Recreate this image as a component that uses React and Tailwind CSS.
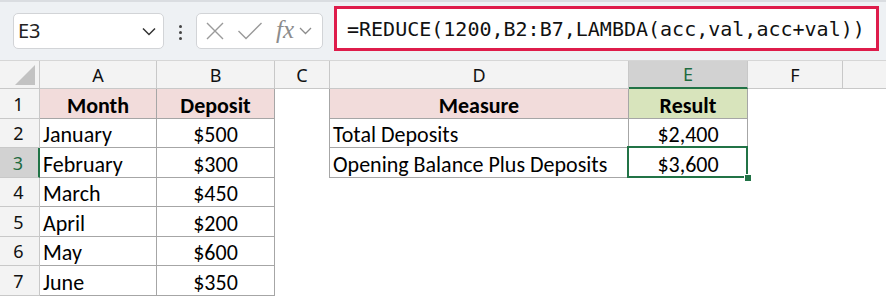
import React from "react";

const COLS = [
  "w-[117px]",
  "w-[118px]",
  "w-[55px]",
  "w-[299px]",
  "w-[119px]",
  "w-[95px]",
];

const ROW_H = ["h-[30px]", "h-[29px]", "h-[30px]", "h-[29px]", "h-[30px]", "h-[29px]", "h-[30px]"];

const data = [
  ["Month", "Deposit", "", "Measure", "Result"],
  ["January", "$500", "", "Total Deposits", "$2,400"],
  ["February", "$300", "", "Opening Balance Plus Deposits", "$3,600"],
  ["March", "$450", "", "", ""],
  ["April", "$200", "", "", ""],
  ["May", "$600", "", "", ""],
  ["June", "$350", "", "", ""],
];

const cellFont = "font-['Carlito','Lato',sans-serif] text-[22px] leading-none text-black";
const hdrFont = "font-['Noto_Sans','Open_Sans',sans-serif] text-[18px] leading-none";

function Toolbar() {
  return (
    <div className="h-[61px] bg-[#eef1f4] border-t-2 border-[#dadde1] border-b border-b-[#d6d6d6] flex items-start">
      {/* name box */}
      <div className="ml-[13px] mt-[11px] w-[151px] h-[36px] bg-white border border-[#d2d4d7] rounded-[5px] flex items-center justify-between pl-[4px] pr-[7px]">
        <span className="font-['Noto_Sans',sans-serif] text-[20px] text-[#222] leading-none">E3</span>
        <svg width="14" height="9" viewBox="0 0 14 9">
          <path d="M1 1.5 L7 7.5 L13 1.5" fill="none" stroke="#333" strokeWidth="1.5" />
        </svg>
      </div>
      {/* dots */}
      <div className="ml-[15px] mt-[23px] flex flex-col gap-[3px]">
        <div className="w-[3px] h-[3px] bg-[#444] rounded-full" />
        <div className="w-[3px] h-[3px] bg-[#444] rounded-full" />
        <div className="w-[3px] h-[3px] bg-[#444] rounded-full" />
      </div>
      {/* fx box */}
      <div className="ml-[14px] mt-[11px] w-[127px] h-[36px] bg-white border border-[#d2d4d7] rounded-[5px] flex items-center pl-[8px]">
        <svg width="20" height="20" viewBox="0 0 20 20">
          <path d="M2 2 L18 18 M18 2 L2 18" stroke="#9a9a9a" strokeWidth="1.4" fill="none" />
        </svg>
        <svg width="26" height="20" viewBox="0 0 26 20" className="ml-[12px]">
          <path d="M1.5 10 L9 17.5 L24.5 2" stroke="#9a9a9a" strokeWidth="1.4" fill="none" />
        </svg>
        <span className="ml-[13px] font-['Liberation_Serif',serif] italic text-[25px] text-[#8c8c8c] leading-none -mt-[4px]">fx</span>
        <svg width="13" height="8" viewBox="0 0 13 8" className="ml-[5px]">
          <path d="M1 1 L6.5 6.5 L12 1" fill="none" stroke="#8c8c8c" strokeWidth="1.3" />
        </svg>
      </div>
      {/* formula */}
      <div className="ml-[11px] mt-[4px] w-[545px] h-[45px] bg-white border-[3px] border-[#de1c4b] flex items-center pl-[10px]">
        <span className="font-['DejaVu_Sans_Mono',monospace] text-[20px] text-[#111] leading-none">
          =REDUCE(1200,B2:B7,LAMBDA(acc,val,acc+val))
        </span>
      </div>
    </div>
  );
}

function ColumnHeaders() {
  const letters = ["A", "B", "C", "D", "E", "F"];
  return (
    <div className="flex h-[28px] bg-[#f3f3f3]">
      <div className="w-[40px] h-full border-r border-b border-[#c8c8c8] flex items-end justify-end pr-[4px] pb-[3px]">
        <svg width="20" height="20" viewBox="0 0 20 20">
          <polygon points="20,0 20,20 0,20" fill="#c2c2c2" />
        </svg>
      </div>
      {letters.map((l, i) =>
        l === "E" ? (
          <div
            key={l}
            className={`${COLS[i]} h-full bg-[#d2d2d2] border-r border-r-[#c8c8c8] border-b-2 border-b-[#217346] flex items-center justify-center text-[#1e6b40] ${hdrFont}`}
          >
            {l}
          </div>
        ) : (
          <div
            key={l}
            className={`${COLS[i]} h-full border-r border-b border-[#c8c8c8] flex items-center justify-center text-[#111] ${hdrFont}`}
          >
            {l}
          </div>
        )
      )}
      <div className="flex-1 h-full border-b border-[#c8c8c8]" />
    </div>
  );
}

function Row({ r }) {
  const row = data[r];
  const h = ROW_H[r];
  const isHead = r === 0;
  const inTable2 = r <= 2;
  const sel = r === 2;
  const bordered = "border-r border-b border-[#a6a6a6]";
  return (
    <div className={`flex ${h}`}>
      {sel ? (
        <div className={`w-[40px] h-full bg-[#d2d2d2] border-b border-b-[#c8c8c8] border-r-2 border-r-[#217346] flex items-center justify-center pr-[2px] text-[#1e6b40] ${hdrFont}`}>
          {r + 1}
        </div>
      ) : (
        <div className={`w-[40px] h-full bg-[#f3f3f3] border-r border-b border-[#c8c8c8] flex items-center justify-center pr-[2px] text-[#111] ${hdrFont}`}>
          {r + 1}
        </div>
      )}
      {/* A */}
      <div className={`${COLS[0]} h-full ${bordered} flex items-end pb-[1px] ${isHead ? "bg-[#f2dcdb] justify-center font-bold" : "bg-white pl-[3px]"} ${cellFont}`}>
        {row[0]}
      </div>
      {/* B */}
      <div className={`${COLS[1]} h-full ${bordered} flex items-end justify-center pb-[1px] ${isHead ? "bg-[#f2dcdb] font-bold" : "bg-white"} ${cellFont}`}>
        {row[1]}
      </div>
      {/* C */}
      <div className={`${COLS[2]} h-full bg-white ${inTable2 ? "border-r border-[#a6a6a6]" : ""}`} />
      {/* D */}
      {inTable2 ? (
        <div className={`${COLS[3]} h-full ${bordered} flex items-end pb-[1px] ${isHead ? "bg-[#f2dcdb] justify-center font-bold" : "bg-white pl-[3px]"} ${cellFont}`}>
          {row[3]}
        </div>
      ) : (
        <div className={`${COLS[3]} h-full bg-white`} />
      )}
      {/* E */}
      {inTable2 ? (
        <div className={`relative ${COLS[4]} h-full ${bordered} flex items-end justify-center pb-[1px] ${isHead ? "bg-[#d8e4bc] font-bold" : "bg-white"} ${cellFont}`}>
          {row[4]}
          {sel && (
            <>
              <div className="absolute z-10 -left-[2px] -top-[2px] -right-[1px] -bottom-[1px] border-2 border-[#217346]" />
              <div className="absolute z-20 -right-[5px] -bottom-[5px] w-[8px] h-[8px] bg-[#217346] border border-white" />
            </>
          )}
        </div>
      ) : (
        <div className={`${COLS[4]} h-full bg-white`} />
      )}
      <div className={`${COLS[5]} h-full bg-white`} />
      <div className="flex-1 h-full bg-white" />
    </div>
  );
}

export default function App() {
  return (
    <div className="w-[886px] h-[298px] overflow-hidden bg-white">
      <Toolbar />
      <ColumnHeaders />
      {data.map((_, r) => (
        <Row key={r} r={r} />
      ))}
    </div>
  );
}
